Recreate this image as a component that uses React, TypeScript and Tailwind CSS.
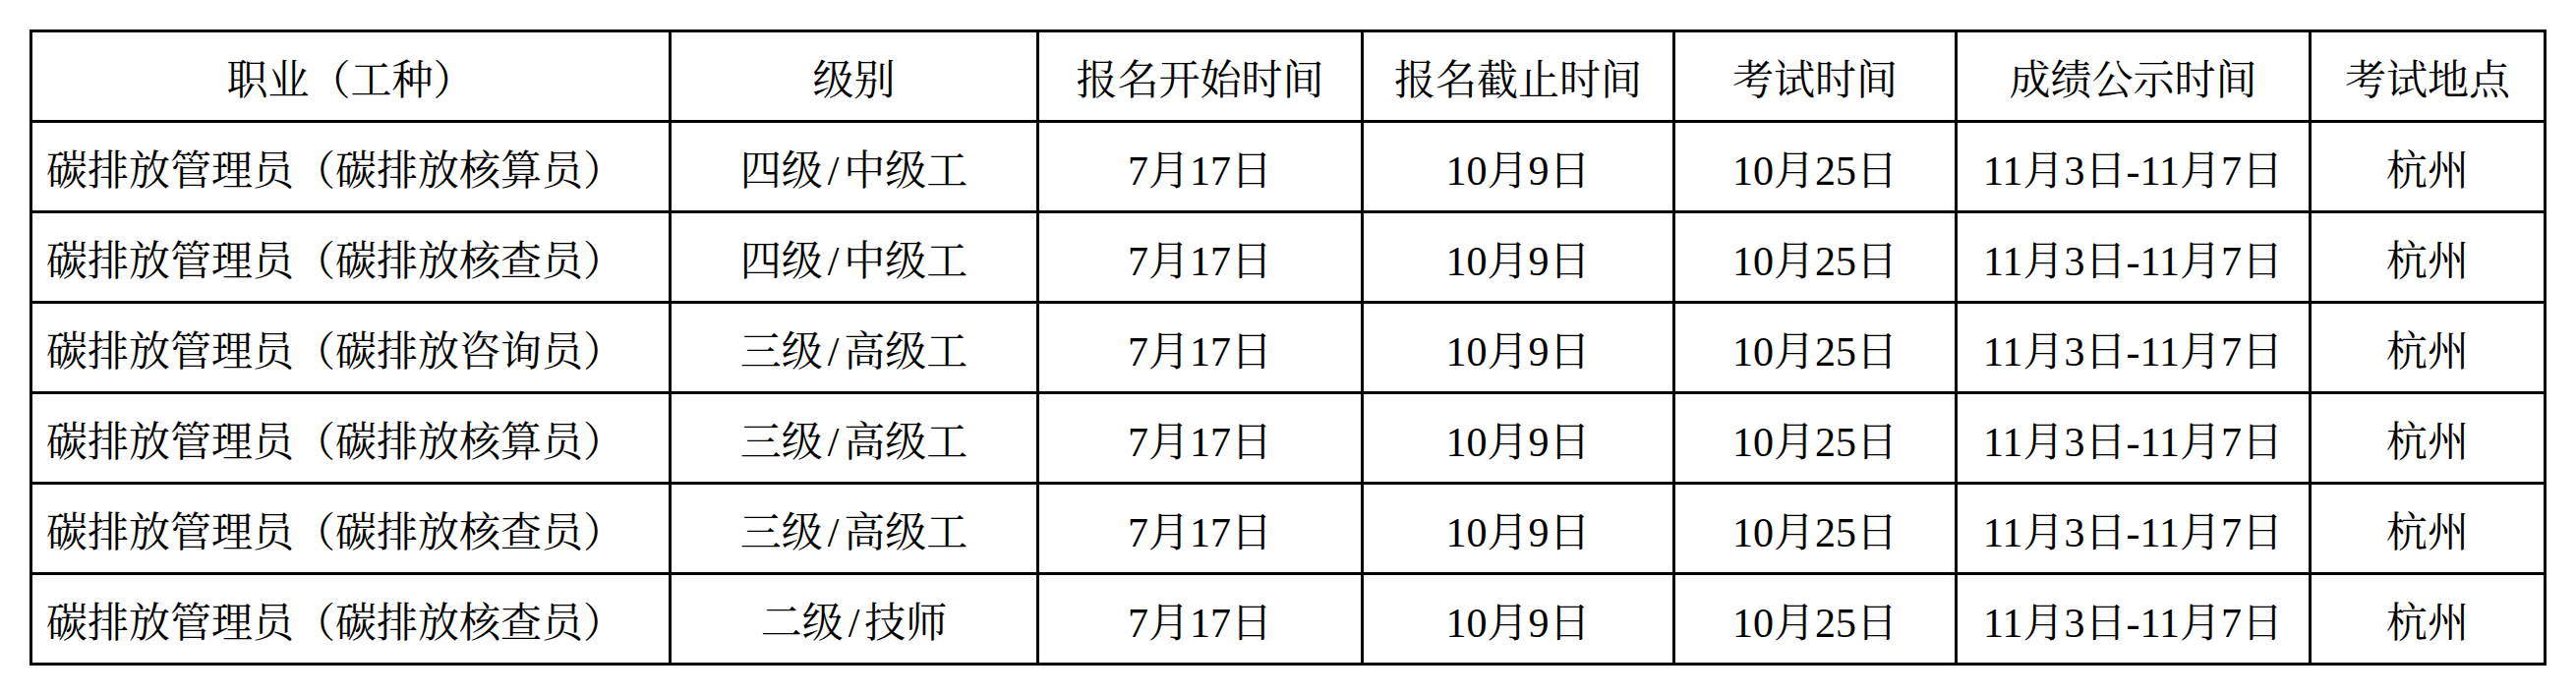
const headers = ["职业（工种）", "级别", "报名开始时间", "报名截止时间", "考试时间", "成绩公示时间", "考试地点"];

const rows = [
  ["碳排放管理员（碳排放核算员）", "四级", "中级工"],
  ["碳排放管理员（碳排放核查员）", "四级", "中级工"],
  ["碳排放管理员（碳排放咨询员）", "三级", "高级工"],
  ["碳排放管理员（碳排放核算员）", "三级", "高级工"],
  ["碳排放管理员（碳排放核查员）", "三级", "高级工"],
  ["碳排放管理员（碳排放核查员）", "二级", "技师"],
];

const widths = ["w-[650px]", "w-[374px]", "w-[330px]", "w-[317px]", "w-[287px]", "w-[360px]", "w-[239px]"];

function Cell({ i, children, left }: { i: number; children: React.ReactNode; left?: boolean }) {
  return (
    <div
      className={`${widths[i]} h-[92px] shrink-0 border-r-[3px] border-b-[3px] border-black flex items-center pt-[8px] ${
        left ? "justify-start pl-[14px]" : "justify-center"
      }`}
    >
      {children}
    </div>
  );
}

export default function App() {
  return (
    <div className="w-[2620px] h-[708px] bg-white pt-[30px] pl-[30px] text-black text-[42px] leading-none font-['Liberation_Serif','Noto_Serif_CJK_SC','Noto_Sans_CJK_SC',serif]">
      <div className="w-[2560px] border-l-[3px] border-t-[3px] border-black">
        <div className="flex">
          {headers.map((h, i) => (
            <Cell key={i} i={i}>
              {h}
            </Cell>
          ))}
        </div>
        {rows.map((r, k) => (
          <div key={k} className="flex">
            <Cell i={0} left>
              {r[0]}
            </Cell>
            <Cell i={1}>
              {r[1]}
              <span className="mx-[5px]">/</span>
              {r[2]}
            </Cell>
            <Cell i={2}>7月17日</Cell>
            <Cell i={3}>10月9日</Cell>
            <Cell i={4}>10月25日</Cell>
            <Cell i={5}>11月3日-11月7日</Cell>
            <Cell i={6}>杭州</Cell>
          </div>
        ))}
      </div>
    </div>
  );
}
